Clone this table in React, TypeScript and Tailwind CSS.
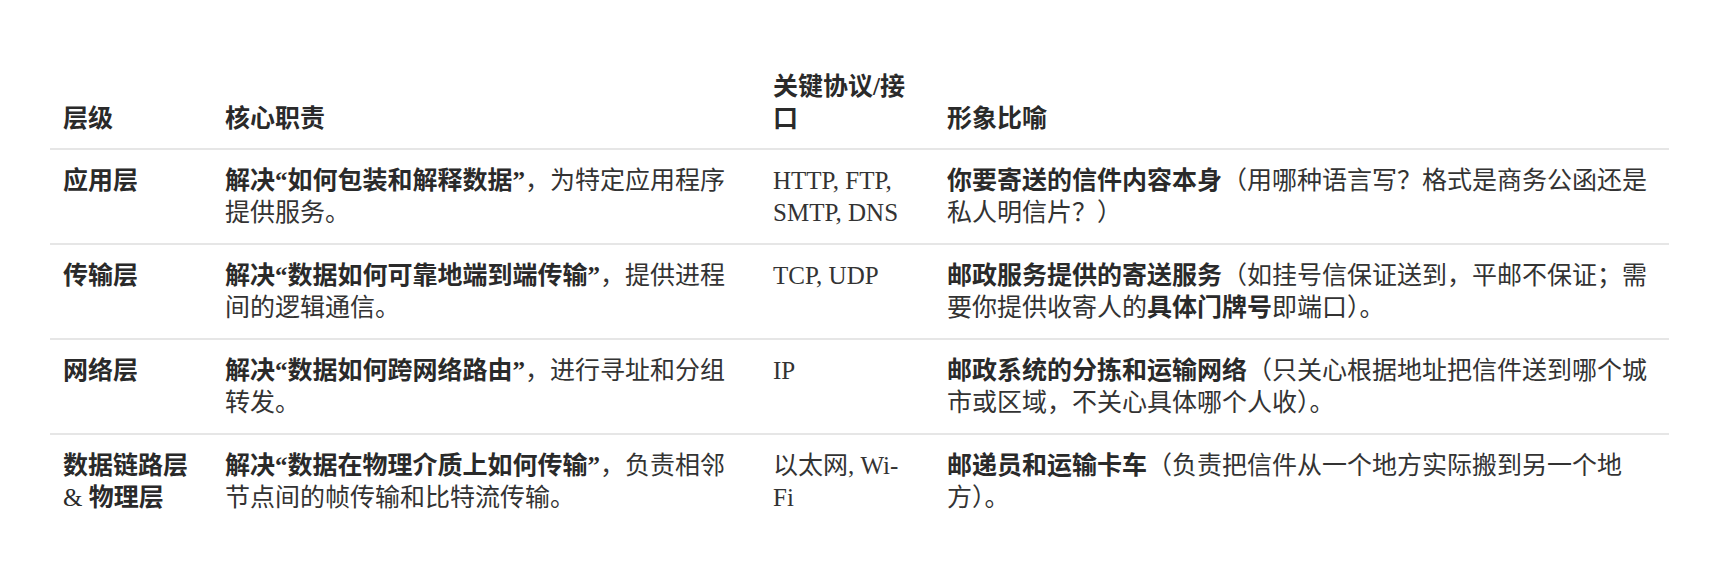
const rows = [
  {
    layer: <>应用层</>,
    duty: (
      <>
        <strong>解决“如何包装和解释数据”</strong>，为特定应用程序提供服务。
      </>
    ),
    proto: 'HTTP, FTP, SMTP, DNS',
    metaphor: (
      <>
        <strong>你要寄送的信件内容本身</strong>（用哪种语言写？格式是商务公函还是私人明信片？）
      </>
    ),
  },
  {
    layer: <>传输层</>,
    duty: (
      <>
        <strong>解决“数据如何可靠地端到端传输”</strong>，提供进程间的逻辑通信。
      </>
    ),
    proto: 'TCP, UDP',
    metaphor: (
      <>
        <strong>邮政服务提供的寄送服务</strong>（如挂号信保证送到，平邮不保证；需要你提供收寄人的
        <strong>具体门牌号</strong>即端口）。
      </>
    ),
  },
  {
    layer: <>网络层</>,
    duty: (
      <>
        <strong>解决“数据如何跨网络路由”</strong>，进行寻址和分组转发。
      </>
    ),
    proto: 'IP',
    metaphor: (
      <>
        <strong>邮政系统的分拣和运输网络</strong>（只关心根据地址把信件送到哪个城市或区域，不关心具体哪个人收）。
      </>
    ),
  },
  {
    layer: (
      <>
        数据链路层 <span className="font-normal">&amp;</span> 物理层
      </>
    ),
    duty: (
      <>
        <strong>解决“数据在物理介质上如何传输”</strong>，负责相邻节点间的帧传输和比特流传输。
      </>
    ),
    proto: '以太网, Wi-Fi',
    metaphor: (
      <>
        <strong>邮递员和运输卡车</strong>（负责把信件从一个地方实际搬到另一个地方）。
      </>
    ),
  },
]

export default function App() {
  return (
    <main
      className="min-h-screen bg-white pt-[59px] pl-[50px] text-[25px] leading-[32px] text-[#333]"
      style={{ fontFamily: '"Liberation Serif", "Noto Sans CJK SC", serif' }}
    >
      <table className="w-[1619px] table-fixed border-collapse text-left">
        <colgroup>
          <col className="w-[162px]" />
          <col className="w-[548px]" />
          <col className="w-[174px]" />
          <col className="w-[735px]" />
        </colgroup>
        <thead>
          <tr className="border-b-2 border-[#e6e6e6] align-bottom font-bold text-[#2a2a2a]">
            <th className="pl-[13px] pr-3 pt-3 pb-[13px] font-bold">层级</th>
            <th className="pl-[13px] pr-6 pt-3 pb-[13px] font-bold">核心职责</th>
            <th className="pl-[13px] pr-[22px] pt-3 pb-[13px] font-bold">关键协议/接口</th>
            <th className="pl-[13px] pr-3 pt-3 pb-[13px] font-bold">形象比喻</th>
          </tr>
        </thead>
        <tbody>
          {rows.map((r, i) => (
            <tr
              key={i}
              className={`align-top ${i < rows.length - 1 ? 'border-b-2 border-[#e6e6e6]' : ''}`}
            >
              <td className="pl-[13px] pr-3 pt-[15px] pb-[14px] font-bold text-[#2a2a2a]">{r.layer}</td>
              <td className="pl-[13px] pr-6 pt-[15px] pb-[14px] [&_strong]:font-bold [&_strong]:text-[#2a2a2a]">
                {r.duty}
              </td>
              <td className="pl-[13px] pr-[22px] pt-[15px] pb-[14px]">{r.proto}</td>
              <td className="pl-[13px] pr-[13px] pt-[15px] pb-[14px] [&_strong]:font-bold [&_strong]:text-[#2a2a2a]">
                {r.metaphor}
              </td>
            </tr>
          ))}
        </tbody>
      </table>
    </main>
  )
}
